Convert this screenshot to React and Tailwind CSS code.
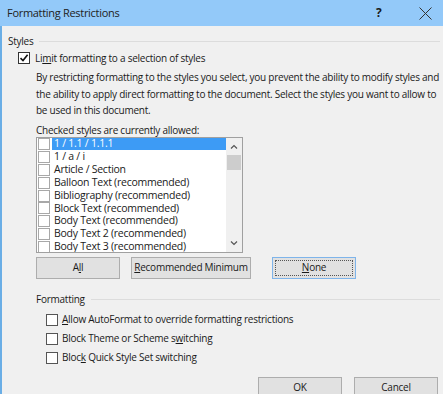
const styles = [
  "1 / 1.1 / 1.1.1",
  "1 / a / i",
  "Article / Section",
  "Balloon Text (recommended)",
  "Bibliography (recommended)",
  "Block Text (recommended)",
  "Body Text (recommended)",
  "Body Text 2 (recommended)",
  "Body Text 3 (recommended)",
];

function Box({ checked, tone = "border-[#333]" }) {
  return (
    <div className={"w-[12px] h-[12px] border bg-white flex items-center justify-center shrink-0 " + tone}>
      {checked && (
        <svg width="10" height="10" viewBox="0 0 10 10">
          <path d="M1.5 5.2 L4 7.6 L8.6 1.8" fill="none" stroke="#111" strokeWidth="1.6" />
        </svg>
      )}
    </div>
  );
}

function Button({ children, focused, className = "" }) {
  return (
    <div
      className={
        "h-[22px] flex items-center justify-center whitespace-nowrap bg-[#e1e1e1] border " +
        (focused ? "border-[#7eb4ea] p-[2px]" : "border-[#adadad]") +
        " " + className
      }
    >
      {focused ? (
        <div className="w-full h-full border border-dotted border-[#555] flex items-center justify-center">{children}</div>
      ) : (
        children
      )}
    </div>
  );
}

function Group({ label }) {
  return (
    <div className="flex items-center gap-[6px] h-[14px]">
      <span>{label}</span>
      <div className="flex-1 h-px bg-[#dcdcdc]" />
    </div>
  );
}

export default function App() {
  return (
    <div className="w-[443px] h-[394px] overflow-hidden bg-[#f0f0f0] text-[#1a1a1a] text-[10px] tracking-[-0.25px] font-['Open_Sans',sans-serif]">
      <div className="h-[26px] bg-[#93c9f9] flex items-center pl-[7px]">
        <span className="flex-1 text-[11px] tracking-[-0.3px] text-[#222]">Formatting Restrictions</span>
        <span className="w-[12px] font-bold text-[12px] mr-[31px]">?</span>
        <svg width="13" height="13" viewBox="0 0 13 13" className="mr-[11px]">
          <path d="M0.5 0.5 L12.5 12.5 M12.5 0.5 L0.5 12.5" stroke="#333" strokeWidth="1" />
        </svg>
      </div>

      <div className="h-[368px] border-l-2 border-[#6aaee6] pl-[6px] pr-[3px] pt-[8px]">
        <Group label="Styles" />

        <div className="flex items-center gap-[5px] ml-[10px] mt-[3px] h-[14px]">
          <Box checked />
          <span>
            Li<u>m</u>it formatting to a selection of styles
          </span>
        </div>

        <p className="ml-[28px] mt-[4px] leading-[16.5px]">
          By restricting formatting to the styles you select, you prevent the ability to modify styles and the
          ability to apply direct formatting to the document. Select the styles you want to allow to be used in
          this document.
        </p>

        <div className="ml-[28px] mt-[4px] leading-[14px]">Checked styles are currently allowed:</div>

        <div className="ml-[28px] w-[207px] h-[116px] border border-[#a0a0a0] bg-white flex overflow-hidden">
          <div className="flex-1 pl-[1px]">
            {styles.map((s, i) => (
              <div key={s} className="flex items-center h-[12.9px]">
                <Box tone="border-[#a8a8a8]" />
                <div
                  className={
                    "flex-1 h-full flex items-center ml-[2px] pl-[2px] text-[10.5px] " +
                    (i === 0 ? "bg-[#3d9bf5] text-white" : "")
                  }
                >
                  {s}
                </div>
              </div>
            ))}
          </div>
          <div className="w-[16px] bg-[#f0f0f0] flex flex-col items-center">
            <svg width="10" height="10" viewBox="0 0 10 10" className="mt-[4px]">
              <path d="M2 6.5 L5 3.5 L8 6.5" fill="none" stroke="#555" strokeWidth="1.2" />
            </svg>
            <div className="w-[14px] h-[15px] bg-[#cdcdcd] mt-[3px]" />
            <div className="flex-1" />
            <svg width="10" height="10" viewBox="0 0 10 10" className="mb-[4px]">
              <path d="M2 3.5 L5 6.5 L8 3.5" fill="none" stroke="#555" strokeWidth="1.2" />
            </svg>
          </div>
        </div>

        <div className="ml-[28px] mt-[4px] flex">
          <Button className="w-[84px]">
            <span>
              A<u>l</u>l
            </span>
          </Button>
          <Button className="w-[120px] ml-[11px]">
            <span>
              <u>R</u>ecommended Minimum
            </span>
          </Button>
          <Button focused className="w-[84px] ml-[21px]">
            <span>
              <u>N</u>one
            </span>
          </Button>
        </div>

        <div className="ml-[28px] mt-[14px]">
          <Group label="Formatting" />
        </div>

        <div className="ml-[38px] mt-[6px] flex flex-col gap-[5px]">
          <div className="flex items-center gap-[4px] h-[14px]">
            <Box tone="border-[#555]" />
            <span>
              <u>A</u>llow AutoFormat to override formatting restrictions
            </span>
          </div>
          <div className="flex items-center gap-[4px] h-[14px]">
            <Box tone="border-[#555]" />
            <span>
              Block Theme or Scheme s<u>w</u>itching
            </span>
          </div>
          <div className="flex items-center gap-[4px] h-[14px]">
            <Box tone="border-[#555]" />
            <span>
              Bloc<u>k</u> Quick Style Set switching
            </span>
          </div>
        </div>

        <div className="flex justify-end gap-[12px] mt-[12px] mr-[2px]">
          <Button className="w-[84px]">OK</Button>
          <Button className="w-[84px]">Cancel</Button>
        </div>
      </div>
    </div>
  );
}
